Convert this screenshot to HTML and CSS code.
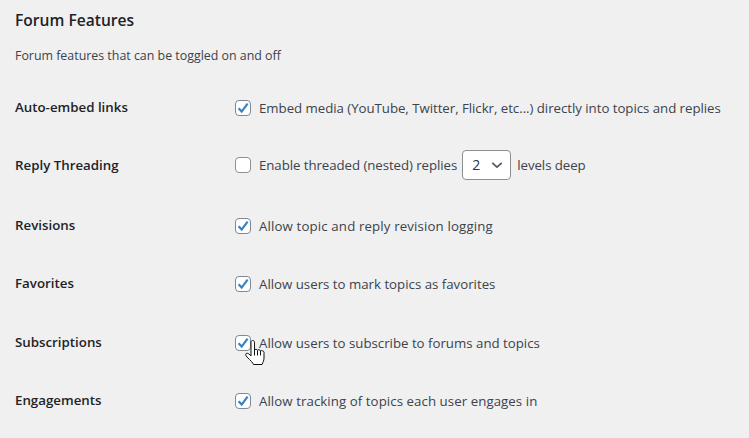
FILE: index.html
```html
<!DOCTYPE html>
<html lang="en">
<head>
<meta charset="utf-8">
<title>Forum Features</title>
<link rel="stylesheet" href="styles.css">
</head>
<body>
<main class="page">
  <h2 class="title">Forum Features</h2>
  <p class="desc">Forum features that can be toggled on and off</p>
  <div class="rows">
    <div class="row">
      <div class="name">Auto-embed links</div>
      <label class="ctl tight"><span class="box on"><svg viewBox="0 0 16 16" class="tick"><path d="M3.6 8.2 6.7 11.6 12.6 3.6" /></svg></span>Embed media (YouTube, Twitter, Flickr, etc...) directly into topics and replies</label>
    </div>
    <div class="row tall">
      <div class="name">Reply Threading</div>
      <label class="ctl tighter"><span class="box"></span>Enable threaded (nested) replies<span class="select"><span class="val">2</span><svg viewBox="0 0 14 8" class="chev"><path d="M1.5 1.5 7 6.5 12.5 1.5" /></svg></span>levels deep</label>
    </div>
    <div class="row">
      <div class="name">Revisions</div>
      <label class="ctl loose"><span class="box on"><svg viewBox="0 0 16 16" class="tick"><path d="M3.6 8.2 6.7 11.6 12.6 3.6" /></svg></span>Allow topic and reply revision logging</label>
    </div>
    <div class="row">
      <div class="name">Favorites</div>
      <label class="ctl"><span class="box on"><svg viewBox="0 0 16 16" class="tick"><path d="M3.6 8.2 6.7 11.6 12.6 3.6" /></svg></span>Allow users to mark topics as favorites</label>
    </div>
    <div class="row">
      <div class="name">Subscriptions</div>
      <label class="ctl"><span class="box on"><svg viewBox="0 0 16 16" class="tick"><path d="M3.6 8.2 6.7 11.6 12.6 3.6" /></svg><svg class="cursor" viewBox="0 0 20 26"><path d="M6 2.200c0-1 .8-1.700 1.700-1.700s1.800.7 1.800 1.700V10c.3-1 2.700-1 3 .3.3-.9 2.600-.8 3 .6.500-.6 3.300-.3 3.500 1.300V18c0 2.500-1 4-2 6.500H8.500c-.8-2-2.800-3.800-6.500-7.500-1.400-1.400-1.800-3.400-.3-3.700 1.300-.2 2.900 1 4.300 2.700z"/><path class="fing" d="M9.500 10v5.500M12.500 10.500v5M15.500 11v4.500"/></svg></span>Allow users to subscribe to forums and topics</label>
    </div>
    <div class="row">
      <div class="name">Engagements</div>
      <label class="ctl mid"><span class="box on"><svg viewBox="0 0 16 16" class="tick"><path d="M3.6 8.2 6.7 11.6 12.6 3.6" /></svg></span>Allow tracking of topics each user engages in</label>
    </div>
  </div>
</main>
</body>
</html>
```

FILE: styles.css
```css
html, body {
  margin: 0;
  padding: 0;
  background: #f0f0f1;
  height: 100%;
  overflow: hidden;
}
.page {
  padding: 10px 15px 0;
  font-family: "Open Sans", sans-serif;
  font-size: 13.25px;
  color: #3c434a;
}
.title {
  margin: 0;
  font-size: 15.6px;
  line-height: 20px;
  font-weight: 600;
  color: #1d2327;
}
.desc {
  margin: 17px 0 0;
  font-size: 12.4px;
  line-height: 18px;
}
.rows {
  margin-top: 13.5px;
}
.row {
  display: grid;
  grid-template-columns: 220px 1fr;
  align-items: center;
  height: 58.5px;
}
.row.tall {
  height: 59.5px;
  align-items: start;
}
.row.tall .name {
  margin-top: 19px;
}
.row.tall .ctl {
  margin-top: 12.5px;
}
.name {
  font-weight: 600;
  font-size: 13.3px;
  color: #1d2327;
  margin-top: -2.5px;
}
.row:first-child .name {
  margin-top: -1.5px;
}
.ctl {
  display: flex;
  align-items: center;
  white-space: nowrap;
}
.tight {
  letter-spacing: -0.035px;
}
.tighter {
  letter-spacing: -0.06px;
}
.mid {
  letter-spacing: 0.07px;
}
.loose {
  letter-spacing: 0.14px;
}
.box {
  position: relative;
  box-sizing: border-box;
  width: 16px;
  height: 16px;
  margin-right: 8px;
  flex: none;
  background: #fff;
  border: 1px solid #8c8f94;
  border-radius: 4px;
}
.box.on {
  border-color: #7e8993;
}
.tick {
  position: absolute;
  left: -1px;
  top: -1px;
  width: 16px;
  height: 16px;
  fill: none;
  stroke: #3582c4;
  stroke-width: 2.2;
}
.select {
  box-sizing: border-box;
  display: inline-flex;
  align-items: center;
  justify-content: space-between;
  width: 49px;
  height: 30px;
  margin: 0 6px 0 5px;
  padding: 0 7px 0 9px;
  background: #fff;
  border: 1px solid #8c8f94;
  border-radius: 4px;
  color: #2c3338;
  font-size: 14px;
}
.chev {
  width: 12px;
  height: 8px;
  fill: none;
  stroke: #50575e;
  stroke-width: 2;
}
.cursor {
  position: absolute;
  left: 9px;
  top: 4px;
  width: 20px;
  height: 26px;
  fill: #fff;
  stroke: #111;
  stroke-width: 1;
}
.fing {
  fill: none;
}
```
